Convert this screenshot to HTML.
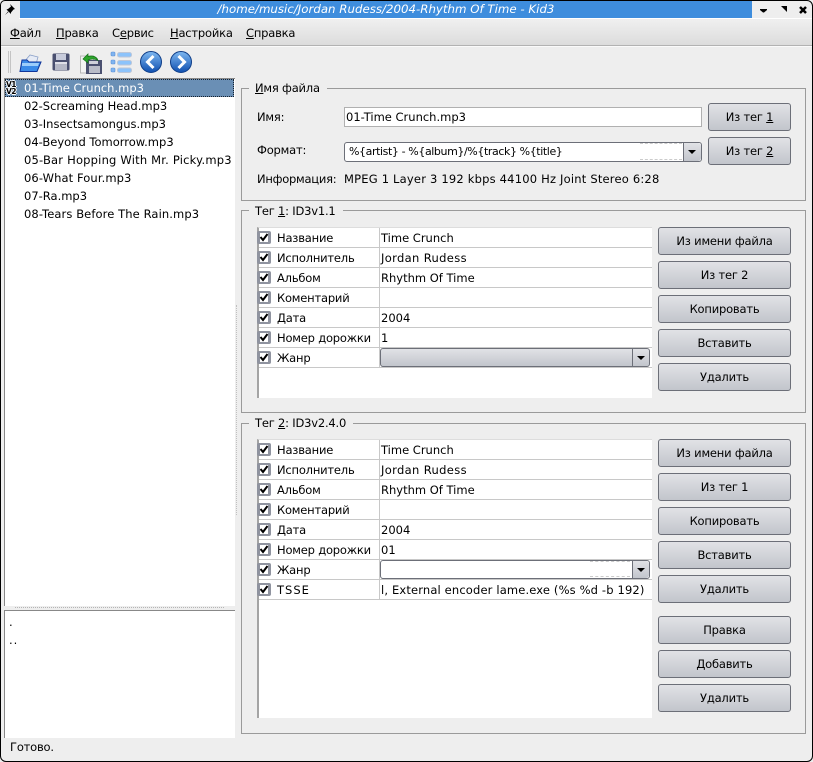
<!DOCTYPE html>
<html><head><meta charset="utf-8">
<style>
html,body{margin:0;padding:0;background:#fff}
#w{position:relative;width:813px;height:762px;overflow:hidden;background:#eee;font-family:"DejaVu Sans","Liberation Sans",sans-serif;font-size:11.5px;letter-spacing:-.2px;color:#000;box-sizing:border-box}
#w div{position:absolute;white-space:nowrap;box-sizing:border-box}
.t{line-height:18px;height:18px}
u{text-decoration:underline}
.b{left:658px;width:133px;height:28px;border:1px solid #6c6f78;border-radius:3px;background:linear-gradient(#e1e2e6,#c2c5cc);text-align:center;line-height:27px;color:#000}
.g{border:1px solid #9a9a9a;left:241px;width:565px}
.gt{background:#eee;padding:0 7px 0 6px;left:249px;line-height:16px;height:16px}
.tb{left:257px;width:395px;background:#fff;border-left:2px solid #a4a4a4;border-top:1px solid #ddd}
.r{left:0;width:393px;height:20px;border-bottom:1px solid #c8c8c8;line-height:20px}
.c{left:-2px;top:3px;width:14px;height:13px;background:#8f939f;border-radius:2px}
.c svg{position:absolute;left:1px;top:1px}
.l{left:18px;top:0}
.v{left:120px;top:0;width:273px;height:19px;border-left:1px solid #c8c8c8;padding-left:1px;overflow:hidden;letter-spacing:0}
.f{left:24px;line-height:18px;height:18px;letter-spacing:0}
.ar{width:0;height:0;border:4px solid transparent;border-top:4px solid #000;border-bottom:0}
</style></head><body>
<div id="w">
<svg width="0" height="0" style="position:absolute"><defs><symbol id="ck" viewBox="0 0 12 11"><rect x="2" y="1" width="8" height="9" fill="#fff"/><path d="M2.500 5l2.500 3 4.500-6" fill="none" stroke="#000" stroke-width="2"/></symbol><linearGradient id="bl" x1="0" y1="0" x2="0" y2="1"><stop offset="0" stop-color="#7fb8f0"/><stop offset="1" stop-color="#0f4fb0"/></linearGradient></defs></svg>
<!-- window frame -->
<div style="left:0;top:0;width:813px;height:762px;border:1px solid #000;border-radius:5px 6px 6px 6px;z-index:9;pointer-events:none"></div>
<!-- title -->
<div style="left:20px;top:1px;width:732px;height:17px;background:#3e8ddd;color:#fff;font-style:italic;text-align:center;line-height:17px;font-size:11.800px;letter-spacing:0">/home/music/Jordan Rudess/2004-Rhythm Of Time - Kid3</div>
<div style="left:19px;top:18px;width:794px;height:1px;background:#fff"></div>
<svg style="position:absolute;left:3px;top:3px" width="14" height="14" viewBox="0 0 14 14"><path d="M7 1l5 5-1.500.5-2.500 3L8 11 3.500 6.500 5 6l3-2.500zM5 8.500L2 12l3.500-3z" fill="#000"/></svg>
<svg style="position:absolute;left:758px;top:4px" width="52" height="12" viewBox="0 0 52 12"><path d="M2 5h7v1L6 8.500H5L2 6z" fill="#000"/><path d="M23 2h6v6z" fill="#000"/><path d="M42 3l6 6M48 3l-6 6" stroke="#000" stroke-width="2.500" fill="none"/></svg>
<!-- menu -->
<div style="left:1px;top:20px;width:811px;height:26px;background:linear-gradient(#efefef,#dcdcdc);border-bottom:1px solid #b2b2b2"></div>
<div class="t" style="left:10px;top:24px"><u>Ф</u>айл</div>
<div class="t" style="left:56px;top:24px"><u>П</u>равка</div>
<div class="t" style="left:112px;top:24px">С<u>е</u>рвис</div>
<div class="t" style="left:170px;top:24px"><u>Н</u>астройка</div>
<div class="t" style="left:246px;top:24px"><u>С</u>правка</div>
<!-- toolbar -->
<div style="left:1px;top:46px;width:811px;height:32px;background:#eee;border-top:1px solid #fafafa"></div>
<div style="left:8px;top:51px;width:3px;height:22px;border-left:1px solid #c4c4c4;border-right:1px solid #c4c4c4"></div>
<svg style="position:absolute;left:19px;top:51px" width="24" height="22" viewBox="0 0 24 22"><path d="M5 11L11 4l8 2-2 7z" fill="#e6ebf5" stroke="#8aa0c8" stroke-width=".8"/><path d="M3 9h5l2 2h12l-4 9H1z" fill="#3a8ae8"/><path d="M3 12h17l-1 3H3z" fill="#9ccdfb"/><path d="M3 9h5l2 2h12l-4 9.500H1z" fill="none" stroke="#10369a"/></svg>
<svg style="position:absolute;left:52px;top:53px" width="18" height="18" viewBox="0 0 18 18"><rect x=".5" y=".5" width="17" height="17" rx="1.500" fill="#4a5070"/><rect x="4" y="1" width="10" height="6" fill="#c8ccdc"/><rect x="3" y="9" width="12" height="8" fill="#b5b8c6"/><rect x="3" y="9" width="12" height="2" fill="#dfe0e8"/></svg>
<svg style="position:absolute;left:80px;top:51px" width="23" height="23" viewBox="0 0 23 23"><rect x=".5" y="5" width="13" height="17" fill="#f4f4f4" stroke="#b8b8b8"/><rect x="6" y="9" width="16" height="14" fill="#4a5070"/><rect x="9" y="15" width="11" height="7" fill="#b9bcc8"/><rect x="9" y="10" width="9" height="3" fill="#ced0da"/><path d="M3 8l5-5v2.500c5-1.500 9 .5 10 4-3-2-6-2-10-.5V12z" fill="#2da52b" stroke="#14701a" stroke-width=".7"/></svg>
<svg style="position:absolute;left:110px;top:51px" width="23" height="22" viewBox="0 0 23 22"><g fill="#7fb4f0" stroke="#5a8fd6" stroke-width=".6"><rect x="1" y="1" width="4" height="4" rx="1"/><rect x="1" y="9" width="4" height="4" rx="1"/><rect x="1" y="17" width="4" height="4" rx="1"/></g><g fill="#8cc3fb" stroke="#bcc6d8"><rect x="7.500" y="1.500" width="14" height="4.500" rx="2"/><rect x="7.500" y="9.500" width="14" height="4.500" rx="2"/><rect x="7.500" y="17" width="14" height="4.500" rx="2"/></g></svg>
<svg style="position:absolute;left:139px;top:50px" width="24" height="24" viewBox="0 0 24 24"><circle cx="12" cy="12" r="10.500" fill="url(#bl)" stroke="#0e3d88"/><path d="M14.500 6L8.500 12l6 6" fill="none" stroke="#fff" stroke-width="3"/></svg>
<svg style="position:absolute;left:169px;top:50px" width="24" height="24" viewBox="0 0 24 24"><circle cx="12" cy="12" r="10.500" fill="url(#bl)" stroke="#0e3d88"/><path d="M9.500 6l6 6-6 6" fill="none" stroke="#fff" stroke-width="3"/></svg>
<!-- file list -->
<div style="left:4px;top:78px;width:231px;height:528px;background:#fff;border-left:1px solid #888;border-top:1px solid #888"></div>
<div style="left:5px;top:79px;width:229px;height:18px;background:#6a8fb5;border:1px dotted #16202c"></div>
<div style="left:6px;top:81px;font:bold 7.500px/7px 'DejaVu Sans',sans-serif;color:#000;letter-spacing:-.5px;text-shadow:1px 0 #fff,-1px 0 #fff,0 1px #fff,0 -1px #fff">V1<br>V2</div>
<div class="f" style="top:79px;color:#fff">01-Time Crunch.mp3</div>
<div class="f" style="top:97px">02-Screaming Head.mp3</div>
<div class="f" style="top:115px">03-Insectsamongus.mp3</div>
<div class="f" style="top:133px">04-Beyond Tomorrow.mp3</div>
<div class="f" style="top:151px;letter-spacing:.2px">05-Bar Hopping With Mr. Picky.mp3</div>
<div class="f" style="top:169px;letter-spacing:.1px">06-What Four.mp3</div>
<div class="f" style="top:187px">07-Ra.mp3</div>
<div class="f" style="top:205px;letter-spacing:.1px">08-Tears Before The Rain.mp3</div>
<div style="left:15px;top:607px;width:209px;height:1px;border-top:1px dotted #b5b5b5"></div>
<div style="left:236px;top:305px;width:1px;height:210px;border-left:1px dotted #c0c0c0"></div>
<div style="left:4px;top:610px;width:231px;height:128px;background:#fff;border-left:1px solid #888;border-top:1px solid #888"></div>
<div class="t" style="left:9px;top:613px">.</div>
<div class="t" style="left:9px;top:631px;letter-spacing:1px">..</div>
<div class="t" style="left:10px;top:738px">Готово.</div>

<!-- group 1 -->
<div class="g" style="top:88px;height:113px"></div>
<div class="gt" style="top:80px"><u>И</u>мя файла</div>
<div class="t" style="left:257px;top:108px">Имя:</div>
<div style="left:344px;top:107px;width:358px;height:20px;background:#fff;border:1px solid #b0b0b0;padding-left:1px;line-height:19px;letter-spacing:0">01-Time Crunch.mp3</div>
<div class="t" style="left:257px;top:141px">Формат:</div>
<div style="left:344px;top:142px;width:358px;height:20px;background:#fff;border:1px solid #6c6f78;border-radius:3px;padding-left:4px;line-height:18px;font-size:11px;letter-spacing:-.4px">%{artist} - %{album}/%{track} %{title}</div>
<div style="left:640px;top:143px;width:42px;height:1px;border-top:1px dashed #ccc"></div>
<div style="left:640px;top:159px;width:42px;height:1px;border-top:1px dashed #ccc"></div>
<div style="left:683px;top:143px;width:18px;height:18px;background:linear-gradient(#e1e2e6,#c2c5cc);border-left:1px solid #6c6f78;border-radius:0 3px 3px 0"></div>
<div class="ar" style="left:688px;top:150px"></div>
<div class="t" style="left:257px;top:170px;letter-spacing:-.25px">Информация:</div>
<div class="t" style="left:344px;top:170px;letter-spacing:.2px">MPEG 1 Layer 3 192 kbps 44100 Hz Joint Stereo 6:28</div>
<div class="b" style="left:708px;width:83px;top:103px">Из тег <u>1</u></div>
<div class="b" style="left:708px;width:83px;top:137px">Из тег <u>2</u></div>

<!-- group 2 -->
<div class="g" style="top:210px;height:203px"></div>
<div class="gt" style="top:203px">Тег <u>1</u>: ID3v1.1</div>
<div class="tb" style="top:227px;height:171px">
<div class="r" style="top:0"><div class="c"><svg width="12" height="11"><use href="#ck"/></svg></div><div class="l">Название</div><div class="v">Time Crunch</div></div>
<div class="r" style="top:20px"><div class="c"><svg width="12" height="11"><use href="#ck"/></svg></div><div class="l">Исполнитель</div><div class="v" style="letter-spacing:.35px">Jordan Rudess</div></div>
<div class="r" style="top:40px"><div class="c"><svg width="12" height="11"><use href="#ck"/></svg></div><div class="l">Альбом</div><div class="v">Rhythm Of Time</div></div>
<div class="r" style="top:60px"><div class="c"><svg width="12" height="11"><use href="#ck"/></svg></div><div class="l">Коментарий</div><div class="v"></div></div>
<div class="r" style="top:80px"><div class="c"><svg width="12" height="11"><use href="#ck"/></svg></div><div class="l">Дата</div><div class="v">2004</div></div>
<div class="r" style="top:100px"><div class="c"><svg width="12" height="11"><use href="#ck"/></svg></div><div class="l">Номер дорожки</div><div class="v">1</div></div>
<div class="r" style="top:120px"><div class="c"><svg width="12" height="11"><use href="#ck"/></svg></div><div class="l">Жанр</div><div class="v"></div></div>
</div>
<div style="left:380px;top:348px;width:270px;height:19px;background:linear-gradient(#e1e2e6,#c2c5cc);border:1px solid #6c6f78;border-radius:3px"></div>
<div style="left:632px;top:349px;width:1px;height:17px;background:#6c6f78"></div>
<div class="ar" style="left:637px;top:356px"></div>
<div class="b" style="top:227px">Из имени файла</div>
<div class="b" style="top:261px">Из тег 2</div>
<div class="b" style="top:295px">Копировать</div>
<div class="b" style="top:329px">Вставить</div>
<div class="b" style="top:363px">Удалить</div>

<!-- group 3 -->
<div class="g" style="top:423px;height:311px"></div>
<div class="gt" style="top:415px">Тег <u>2</u>: ID3v2.4.0</div>
<div class="tb" style="top:439px;height:279px">
<div class="r" style="top:0"><div class="c"><svg width="12" height="11"><use href="#ck"/></svg></div><div class="l">Название</div><div class="v">Time Crunch</div></div>
<div class="r" style="top:20px"><div class="c"><svg width="12" height="11"><use href="#ck"/></svg></div><div class="l">Исполнитель</div><div class="v" style="letter-spacing:.35px">Jordan Rudess</div></div>
<div class="r" style="top:40px"><div class="c"><svg width="12" height="11"><use href="#ck"/></svg></div><div class="l">Альбом</div><div class="v">Rhythm Of Time</div></div>
<div class="r" style="top:60px"><div class="c"><svg width="12" height="11"><use href="#ck"/></svg></div><div class="l">Коментарий</div><div class="v"></div></div>
<div class="r" style="top:80px"><div class="c"><svg width="12" height="11"><use href="#ck"/></svg></div><div class="l">Дата</div><div class="v">2004</div></div>
<div class="r" style="top:100px"><div class="c"><svg width="12" height="11"><use href="#ck"/></svg></div><div class="l">Номер дорожки</div><div class="v">01</div></div>
<div class="r" style="top:120px"><div class="c"><svg width="12" height="11"><use href="#ck"/></svg></div><div class="l">Жанр</div><div class="v"></div></div>
<div class="r" style="top:140px"><div class="c"><svg width="12" height="11"><use href="#ck"/></svg></div><div class="l" style="letter-spacing:1px">TSSE</div><div class="v" style="letter-spacing:.15px">l, External encoder lame.exe (%s %d -b 192)</div></div>
</div>
<div style="left:380px;top:560px;width:270px;height:19px;background:#fff;border:1px solid #6c6f78;border-radius:3px"></div>
<div style="left:590px;top:561px;width:40px;height:1px;border-top:1px dashed #ccc"></div>
<div style="left:590px;top:576px;width:40px;height:1px;border-top:1px dashed #ccc"></div>
<div style="left:632px;top:561px;width:17px;height:17px;background:linear-gradient(#e1e2e6,#c2c5cc);border-left:1px solid #6c6f78;border-radius:0 3px 3px 0"></div>
<div class="ar" style="left:637px;top:568px"></div>
<div class="b" style="top:439px">Из имени файла</div>
<div class="b" style="top:473px">Из тег 1</div>
<div class="b" style="top:507px">Копировать</div>
<div class="b" style="top:541px">Вставить</div>
<div class="b" style="top:575px">Удалить</div>
<div class="b" style="top:616px">Правка</div>
<div class="b" style="top:650px">Добавить</div>
<div class="b" style="top:684px">Удалить</div>
</div>
</body></html>
